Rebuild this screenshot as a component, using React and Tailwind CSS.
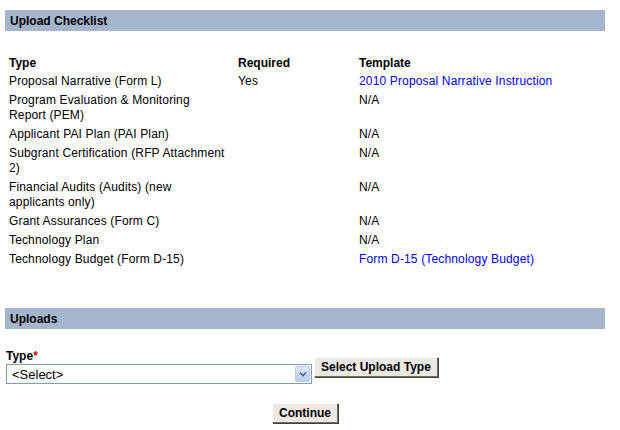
const rows = [
  { type: ['Proposal Narrative (Form L)'], required: 'Yes', template: '2010 Proposal Narrative Instruction', link: true },
  { type: ['Program Evaluation & Monitoring', 'Report (PEM)'], required: '', template: 'N/A' },
  { type: ['Applicant PAI Plan (PAI Plan)'], required: '', template: 'N/A' },
  { type: ['Subgrant Certification (RFP Attachment', '2)'], required: '', template: 'N/A' },
  { type: ['Financial Audits (Audits) (new', 'applicants only)'], required: '', template: 'N/A' },
  { type: ['Grant Assurances (Form C)'], required: '', template: 'N/A' },
  { type: ['Technology Plan'], required: '', template: 'N/A' },
  { type: ['Technology Budget (Form D-15)'], required: '', template: 'Form D-15 (Technology Budget)', link: true },
]

function SectionBar({ title }) {
  return (
    <div className="h-[21px] bg-[#a5b5cc] flex items-center pl-[5px] font-bold text-[12px] text-black">
      {title}
    </div>
  )
}

function OldButton({ children }) {
  return (
    <button className="h-[20px] px-[6px] bg-[#ece9e4] border border-t-white border-l-white border-r-[#716f64] border-b-[#716f64] shadow-[1px_1px_0_#404040] font-bold text-[12px] leading-none text-black">
      {children}
    </button>
  )
}

export default function App() {
  return (
    <div className="w-[620px] h-[430px] bg-white font-['Liberation_Sans',Arial,sans-serif] text-[12px] text-black">
      <div className="pl-[5px] w-[605px] pt-[10px]">
        <SectionBar title="Upload Checklist" />

        <div className="mt-[24px] pl-[4px] tracking-[0.15px]">
          <div className="grid grid-cols-[229px_121px_1fr] font-bold leading-[15px] py-[1px] tracking-normal">
            <div>Type</div>
            <div>Required</div>
            <div>Template</div>
          </div>
          {rows.map((r, i) => (
            <div key={i} className="grid grid-cols-[229px_121px_1fr] leading-[15px] py-[2px]">
              <div>
                {r.type.map((t, j) => (
                  <div key={j}>{t}</div>
                ))}
              </div>
              <div>{r.required}</div>
              <div className={r.link ? 'text-[#0000ff]' : ''}>{r.template}</div>
            </div>
          ))}
        </div>

        <div className="mt-[39px]">
          <SectionBar title="Uploads" />
        </div>

        <div className="mt-[20px] pl-[1px] flex items-center gap-[2px]">
          <div>
            <div className="font-bold leading-[15px]">
              Type<span className="text-[#e00000]">*</span>
            </div>
            <div className="w-[306px] h-[20px] border border-[#7f9db9] bg-white flex items-center justify-between pl-[5px] pr-[1px]">
              <span className="text-[13px] leading-none">&lt;Select&gt;</span>
              <span className="w-[15px] h-[16px] rounded-[2px] border border-[#b9cbf3] bg-gradient-to-b from-[#dfe8fb] to-[#b7cbf5] flex items-center justify-center">
                <svg width="8" height="6" viewBox="0 0 8 6">
                  <path d="M1 1.5 L4 4.5 L7 1.5" fill="none" stroke="#4d6185" strokeWidth="1.6" />
                </svg>
              </span>
            </div>
          </div>
          <OldButton>Select Upload Type</OldButton>
        </div>

        <div className="mt-[19px] flex justify-center">
          <OldButton>Continue</OldButton>
        </div>
      </div>
    </div>
  )
}
